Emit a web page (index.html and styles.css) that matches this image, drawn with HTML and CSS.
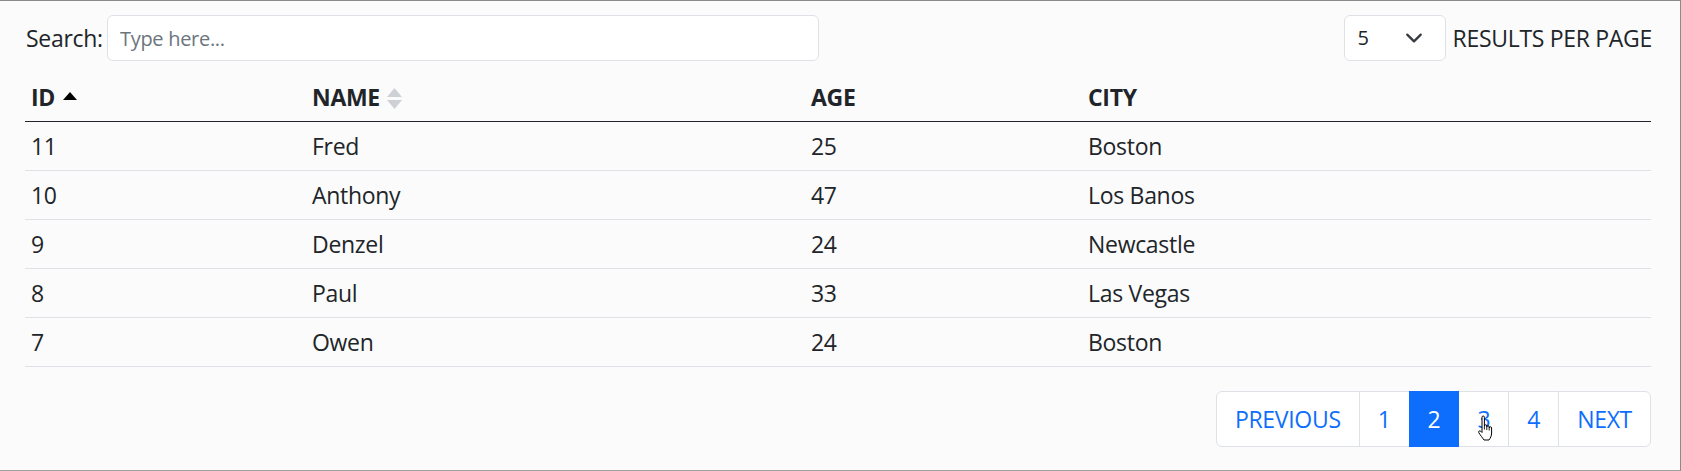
FILE: index.html
```html
<!DOCTYPE html>
<html lang="en">
<head>
<meta charset="utf-8">
<title>Table</title>
<link rel="stylesheet" href="styles.css">
</head>
<body>
<div class="frame">
  <div class="toolbar">
    <div class="search">
      <label class="search-label" for="q">Search:</label>
      <input id="q" class="search-input" type="text" placeholder="Type here...">
    </div>
    <div class="per-page">
      <div class="select">
        <span class="select-value">5</span>
        <svg class="select-chevron" viewBox="0 0 16 16" width="16" height="16"><path d="M2 5l6 6 6-6" fill="none" stroke="#343a40" stroke-width="2" stroke-linecap="round" stroke-linejoin="round"/></svg>
      </div>
      <span class="per-page-label">RESULTS PER PAGE</span>
    </div>
  </div>

  <table class="data">
    <colgroup>
      <col class="c-id"><col class="c-name"><col class="c-age"><col class="c-city">
    </colgroup>
    <thead>
      <tr>
        <th><span class="th-inner">ID<svg class="sort sort-asc" viewBox="0 0 14 8" width="14" height="8"><path d="M7 0L14 8H0Z" fill="#000"/></svg></span></th>
        <th><span class="th-inner">NAME<svg class="sort sort-none" viewBox="0 0 15 21" width="15" height="21"><path d="M7.5 0L15 9H0Z" fill="#cdd1d6"/><path d="M0 12H15L7.5 21Z" fill="#cdd1d6"/></svg></span></th>
        <th>AGE</th>
        <th>CITY</th>
      </tr>
    </thead>
    <tbody>
      <tr><td>11</td><td>Fred</td><td>25</td><td>Boston</td></tr>
      <tr><td>10</td><td>Anthony</td><td>47</td><td>Los Banos</td></tr>
      <tr><td>9</td><td>Denzel</td><td>24</td><td>Newcastle</td></tr>
      <tr><td>8</td><td>Paul</td><td>33</td><td>Las Vegas</td></tr>
      <tr><td>7</td><td>Owen</td><td>24</td><td>Boston</td></tr>
    </tbody>
  </table>

  <nav class="pager">
    <ul class="pagination">
      <li class="page-item"><a class="page-link" href="#">PREVIOUS</a></li>
      <li class="page-item"><a class="page-link" href="#">1</a></li>
      <li class="page-item active"><a class="page-link" href="#">2</a></li>
      <li class="page-item hovered"><a class="page-link" href="#">3</a>
        <svg class="cursor" viewBox="0 0 18 26" width="18" height="26"><path d="M6 2.2a1.2 1.2 0 0 1 2.4 0V11a1.2 1.2 0 0 1 2.4 0v1a1.2 1.2 0 0 1 2.4 0v1a1.2 1.2 0 0 1 2.4 0v5c0 3-1.3 5-2.6 7H8c-1-1.5-3.8-5-5.2-7.3-.8-1.3.8-2.5 1.9-1.5L6 17.5Z" fill="#fff" stroke="#000" stroke-width="1" stroke-linejoin="round"/><path d="M8.4 11v3.5M10.8 12v3M13.2 13v2.5" stroke="#000" stroke-width="0.9" fill="none"/></svg>
      </li>
      <li class="page-item"><a class="page-link" href="#">4</a></li>
      <li class="page-item"><a class="page-link" href="#">NEXT</a></li>
    </ul>
  </nav>
</div>
</body>
</html>
```

FILE: styles.css
```css
* {
  box-sizing: border-box;
}

html, body {
  margin: 0;
  padding: 0;
  background: #fbfbfb;
}

body {
  font-family: "Open Sans", "Noto Sans", "Liberation Sans", sans-serif;
  font-size: 23px;
  letter-spacing: -0.3px;
  line-height: 36px;
  color: #212529;
}

.frame {
  width: 1681px;
  height: 471px;
  border-top: 1px solid #8a8a8a;
  border-right: 1px solid #8a8a8a;
  border-bottom: 1px solid #a0a0a0;
  padding: 14px 28px 0 25px;
  background: #fbfbfb;
}

.toolbar {
  display: flex;
  justify-content: space-between;
  align-items: center;
  height: 46px;
}

.search {
  display: flex;
  align-items: center;
}

.search-label {
  padding-left: 1px;
  width: 82px;
}

.search-input {
  width: 712px;
  height: 46px;
  border: 1px solid #dee2e6;
  border-radius: 6px;
  background: #fff;
  padding: 0 12px;
  font-family: inherit;
  font-size: 20px;
  letter-spacing: -0.3px;
  color: #212529;
  outline: none;
}

.search-input::placeholder {
  color: #6c757d;
}

.per-page {
  display: flex;
  align-items: center;
}

.select {
  width: 102px;
  height: 46px;
  border: 1px solid #dee2e6;
  border-radius: 6px;
  background: #fff;
  display: flex;
  align-items: center;
  justify-content: space-between;
  padding: 0 22px 0 13px;
  font-size: 20px;
}

.select-chevron {
  width: 18px;
  height: 18px;
  display: block;
}

.per-page-label {
  margin-left: 7px;
}

.data {
  width: 1626px;
  margin-top: 12px;
  border-collapse: collapse;
  table-layout: fixed;
}

.c-id { width: 281px; }
.c-name { width: 499px; }
.c-age { width: 277px; }
.c-city { width: 569px; }

.data th,
.data td {
  padding: 6px 6px;
  text-align: left;
  vertical-align: middle;
  height: 49px;
}

.data th {
  font-weight: 700;
  height: 48px;
  border-bottom: 1px solid #212529;
}

.data td {
  border-bottom: 1px solid #dee2e6;
}

.th-inner {
  display: inline-flex;
  align-items: center;
}

.sort {
  display: block;
}

.sort-asc {
  margin-left: 8px;
  margin-top: -2px;
}

.sort-none {
  margin-left: 7px;
  margin-top: 2px;
}

.pager {
  display: flex;
  justify-content: flex-end;
  margin-top: 24px;
  width: 1626px;
}

.pagination {
  display: flex;
  list-style: none;
  margin: 0;
  padding: 0;
}

.page-item {
  position: relative;
  margin-left: -1px;
}

.page-item:first-child {
  margin-left: 0;
}

.page-link {
  display: block;
  padding: 9px 18px;
  border: 1px solid #dee2e6;
  background: #fff;
  color: #0d6efd;
  text-decoration: none;
  line-height: 36px;
}

.page-item:first-child .page-link {
  border-radius: 6px 0 0 6px;
}

.page-item:last-child .page-link {
  border-radius: 0 6px 6px 0;
}

.page-item.active .page-link {
  background: #0d6efd;
  border-color: #0d6efd;
  color: #fff;
  position: relative;
  z-index: 1;
}

.cursor {
  position: absolute;
  left: 18px;
  top: 24px;
  z-index: 2;
  pointer-events: none;
}
```
